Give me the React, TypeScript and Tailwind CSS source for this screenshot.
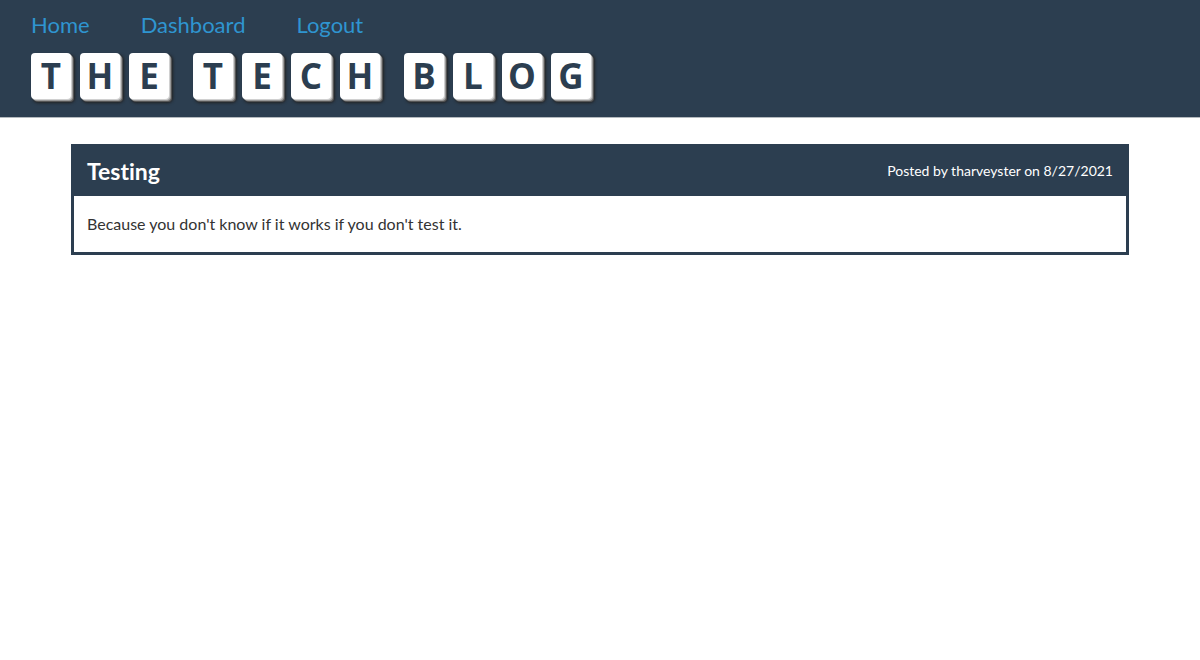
const words = ["THE", "TECH", "BLOG"];

const links = ["Home", "Dashboard", "Logout"];

function Tile({ letter }: { letter: string }) {
  return (
    <span className="flex h-[46px] w-10 items-center justify-center rounded-[4px] bg-white font-['Open_Sans','Noto_Sans',sans-serif] text-[35px] font-bold text-[#2c3e50] shadow-[1px_1px_0_#d0d0d0,2px_2px_0_#999999,3px_3px_0_#555555,3px_3px_3px_1px_#222222]">
      {letter}
    </span>
  );
}

export default function App() {
  return (
    <div className="font-[Lato,'Open_Sans',sans-serif] text-[#333333] [font-variant-ligatures:none]">
      <header className="border-b border-[#b4b9be] bg-[#2c3e50] px-[31px] pt-[7px] pb-4">
        <nav className="flex gap-[51px] text-[22px] leading-9 text-[#2f95d0]">
          {links.map((label) => (
            <a key={label} href="#">
              {label}
            </a>
          ))}
        </nav>
        <h1 className="flex gap-6 pt-[10px] pb-[2px]" aria-label="The Tech Blog">
          {words.map((word) => (
            <span key={word} className="flex gap-[9px]">
              {word.split("").map((letter, i) => (
                <Tile key={i} letter={letter} />
              ))}
            </span>
          ))}
        </h1>
      </header>
      <main className="px-[71px] pt-[26px]">
        <article className="border-[3px] border-[#2c3e50]">
          <div className="flex items-center justify-between bg-[#2c3e50] px-[13px] pt-[6px] pb-[7px] text-white">
            <h2 className="text-[23px] leading-9 font-bold">Testing</h2>
            <p className="text-sm">Posted by tharveyster on 8/27/2021</p>
          </div>
          <p className="px-[13px] py-4 text-base">Because you don't know if it works if you don't test it.</p>
        </article>
      </main>
    </div>
  );
}
